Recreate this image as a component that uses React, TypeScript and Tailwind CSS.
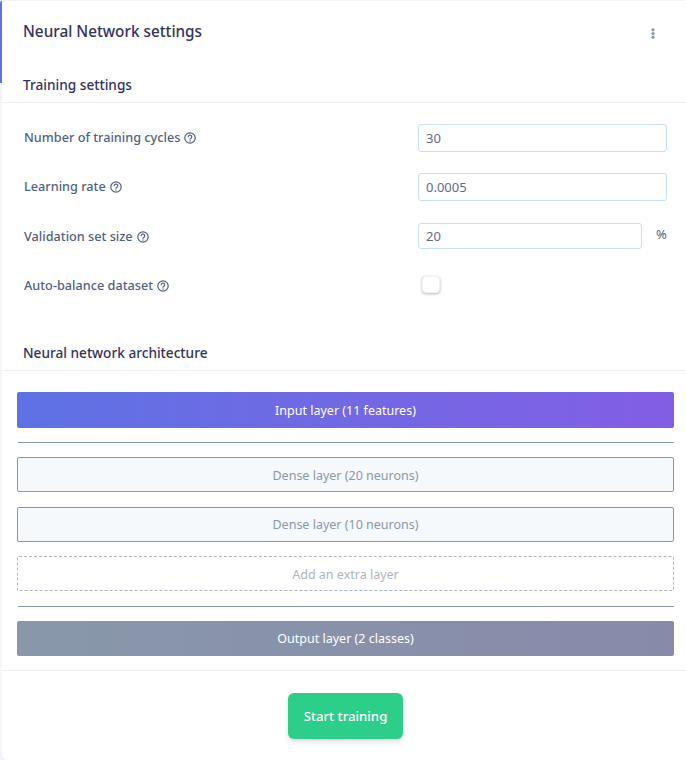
const HelpIcon = () => (
  <svg width="12" height="12" viewBox="0 0 12 12" fill="none" stroke="#525f7f" strokeWidth="1.2" className="ml-1 shrink-0">
    <circle cx="6" cy="6" r="5.2" />
    <path d="M4.3 4.7a1.7 1.7 0 1 1 2.6 1.5c-.6.3-.9.6-.9 1.1" strokeLinecap="round" />
    <circle cx="6" cy="9" r=".7" fill="#525f7f" stroke="none" />
  </svg>
);

const KebabIcon = () => (
  <svg width="4" height="11" viewBox="0 0 4 11" fill="#8898aa" className="mt-[8px] mr-[7px]">
    <circle cx="2" cy="1.8" r="1.6" />
    <circle cx="2" cy="5.5" r="1.6" />
    <circle cx="2" cy="9.2" r="1.6" />
  </svg>
);

const SettingRow = ({ label, value }: { label: string; value: string }) => (
  <div className="flex items-center h-7">
    <label className="flex items-center w-[394px] text-[12.7px] font-medium text-[#525f7f]">
      {label}
      <HelpIcon />
    </label>
    <input
      readOnly
      value={value}
      className="w-[249px] h-7 px-[7px] text-[13px] text-[#5f6b8a] bg-white border border-[#c6e2f1] rounded-[3px] outline-none"
    />
  </div>
);

const App = () => {
  return (
    <div className="w-[686px] h-[760px] overflow-hidden bg-[#f4f5fb] pt-px pl-0.5 font-['Noto_Sans','Open_Sans',sans-serif]">
      <div className="relative h-[759px] bg-white rounded-tl-md rounded-bl-md">
        {/* Accent on the left edge of the header */}
        <div className="absolute -left-0.5 top-0 w-0.5 h-[82px] bg-[#5e72e4] rounded-tl-md" />

        <div className="flex items-start justify-between h-[70px] pl-[21px] pr-6 pt-[19px]">
          <h1 className="text-[15.3px] leading-[22px] font-medium text-[#32325d]">Neural Network settings</h1>
          <KebabIcon />
        </div>

        <h2 className="h-8 pl-[21px] text-[13.65px] leading-7 font-medium text-[#32325d] border-b border-[#eff1f5]">
          Training settings
        </h2>

        <div className="flex flex-col pl-[22px] pt-[21px]">
          <SettingRow label="Number of training cycles" value="30" />
          <div className="mt-[21px]">
            <SettingRow label="Learning rate" value="0.0005" />
          </div>
          <div className="flex items-start h-7 mt-[22px]">
            <label className="flex items-center h-7 w-[394px] text-[12.7px] font-medium text-[#525f7f]">
              Validation set size
              <HelpIcon />
            </label>
            <input
              readOnly
              value="20"
              className="w-[224px] h-[26px] px-[7px] text-[13px] text-[#5f6b8a] bg-white border border-[#c6e2f1] rounded-[3px] outline-none"
            />
            <span className="ml-[14px] mt-[2px] text-[13px] text-[#525f7f]">%</span>
          </div>
          <div className="flex items-center h-7 mt-[21px]">
            <label className="flex items-center w-[398px] text-[12.7px] font-medium text-[#525f7f]">
              Auto-balance dataset
              <HelpIcon />
            </label>
            <span className="w-[18px] h-[17px] mb-[3px] bg-white rounded-[4px] border border-[#f0f1f5] shadow-[0_1px_3px_rgba(50,50,93,0.35)]" />
          </div>
        </div>

        <h2 className="h-8 mt-[39px] pl-[21px] text-[13.65px] leading-7 font-medium text-[#32325d] border-b border-[#eff1f5]">
          Neural network architecture
        </h2>

        <div className="flex flex-col pt-[21px] pl-[15px] pr-[12px] text-[12.5px]">
          <div className="flex items-center justify-center h-9 pt-[2px] rounded-[2px] text-white bg-gradient-to-r from-[#5e72e4] to-[#825ee4]">
            Input layer (11 features)
          </div>
          <div className="h-px mt-[14px] ml-px bg-[#8898aa]" />
          <div className="flex items-center justify-center h-[35px] pt-[3px] mt-[14px] rounded-[2px] bg-[#f6f9fc] border border-[#8898aa] text-[#8898aa]">
            Dense layer (20 neurons)
          </div>
          <div className="flex items-center justify-center h-[35px] pt-px mt-[15px] rounded-[2px] bg-[#f6f9fc] border border-[#8898aa] text-[#8898aa]">
            Dense layer (10 neurons)
          </div>
          <div className="flex items-center justify-center h-[35px] pt-[3px] mt-[14px] rounded-[2px] border border-dashed border-[#adb5bd] text-[#adb5bd]">
            Add an extra layer
          </div>
          <div className="h-px mt-[15px] ml-px bg-[#8898aa]" />
          <div className="flex items-center justify-center h-[35px] pt-px mt-[14px] rounded-[2px] text-white bg-gradient-to-r from-[#8898aa] to-[#888aaa]">
            Output layer (2 classes)
          </div>
        </div>

        <div className="flex justify-center mt-[14px] pt-[22px] pl-[3px] border-t border-[#eff1f5]">
          <button className="w-[115px] h-[46px] pt-px rounded-md bg-[#2dce89] text-white text-[13.2px] font-medium shadow-[0_4px_6px_rgba(50,50,93,0.11),0_1px_3px_rgba(0,0,0,0.08)]">
            Start training
          </button>
        </div>
      </div>
    </div>
  );
};

export default App;
